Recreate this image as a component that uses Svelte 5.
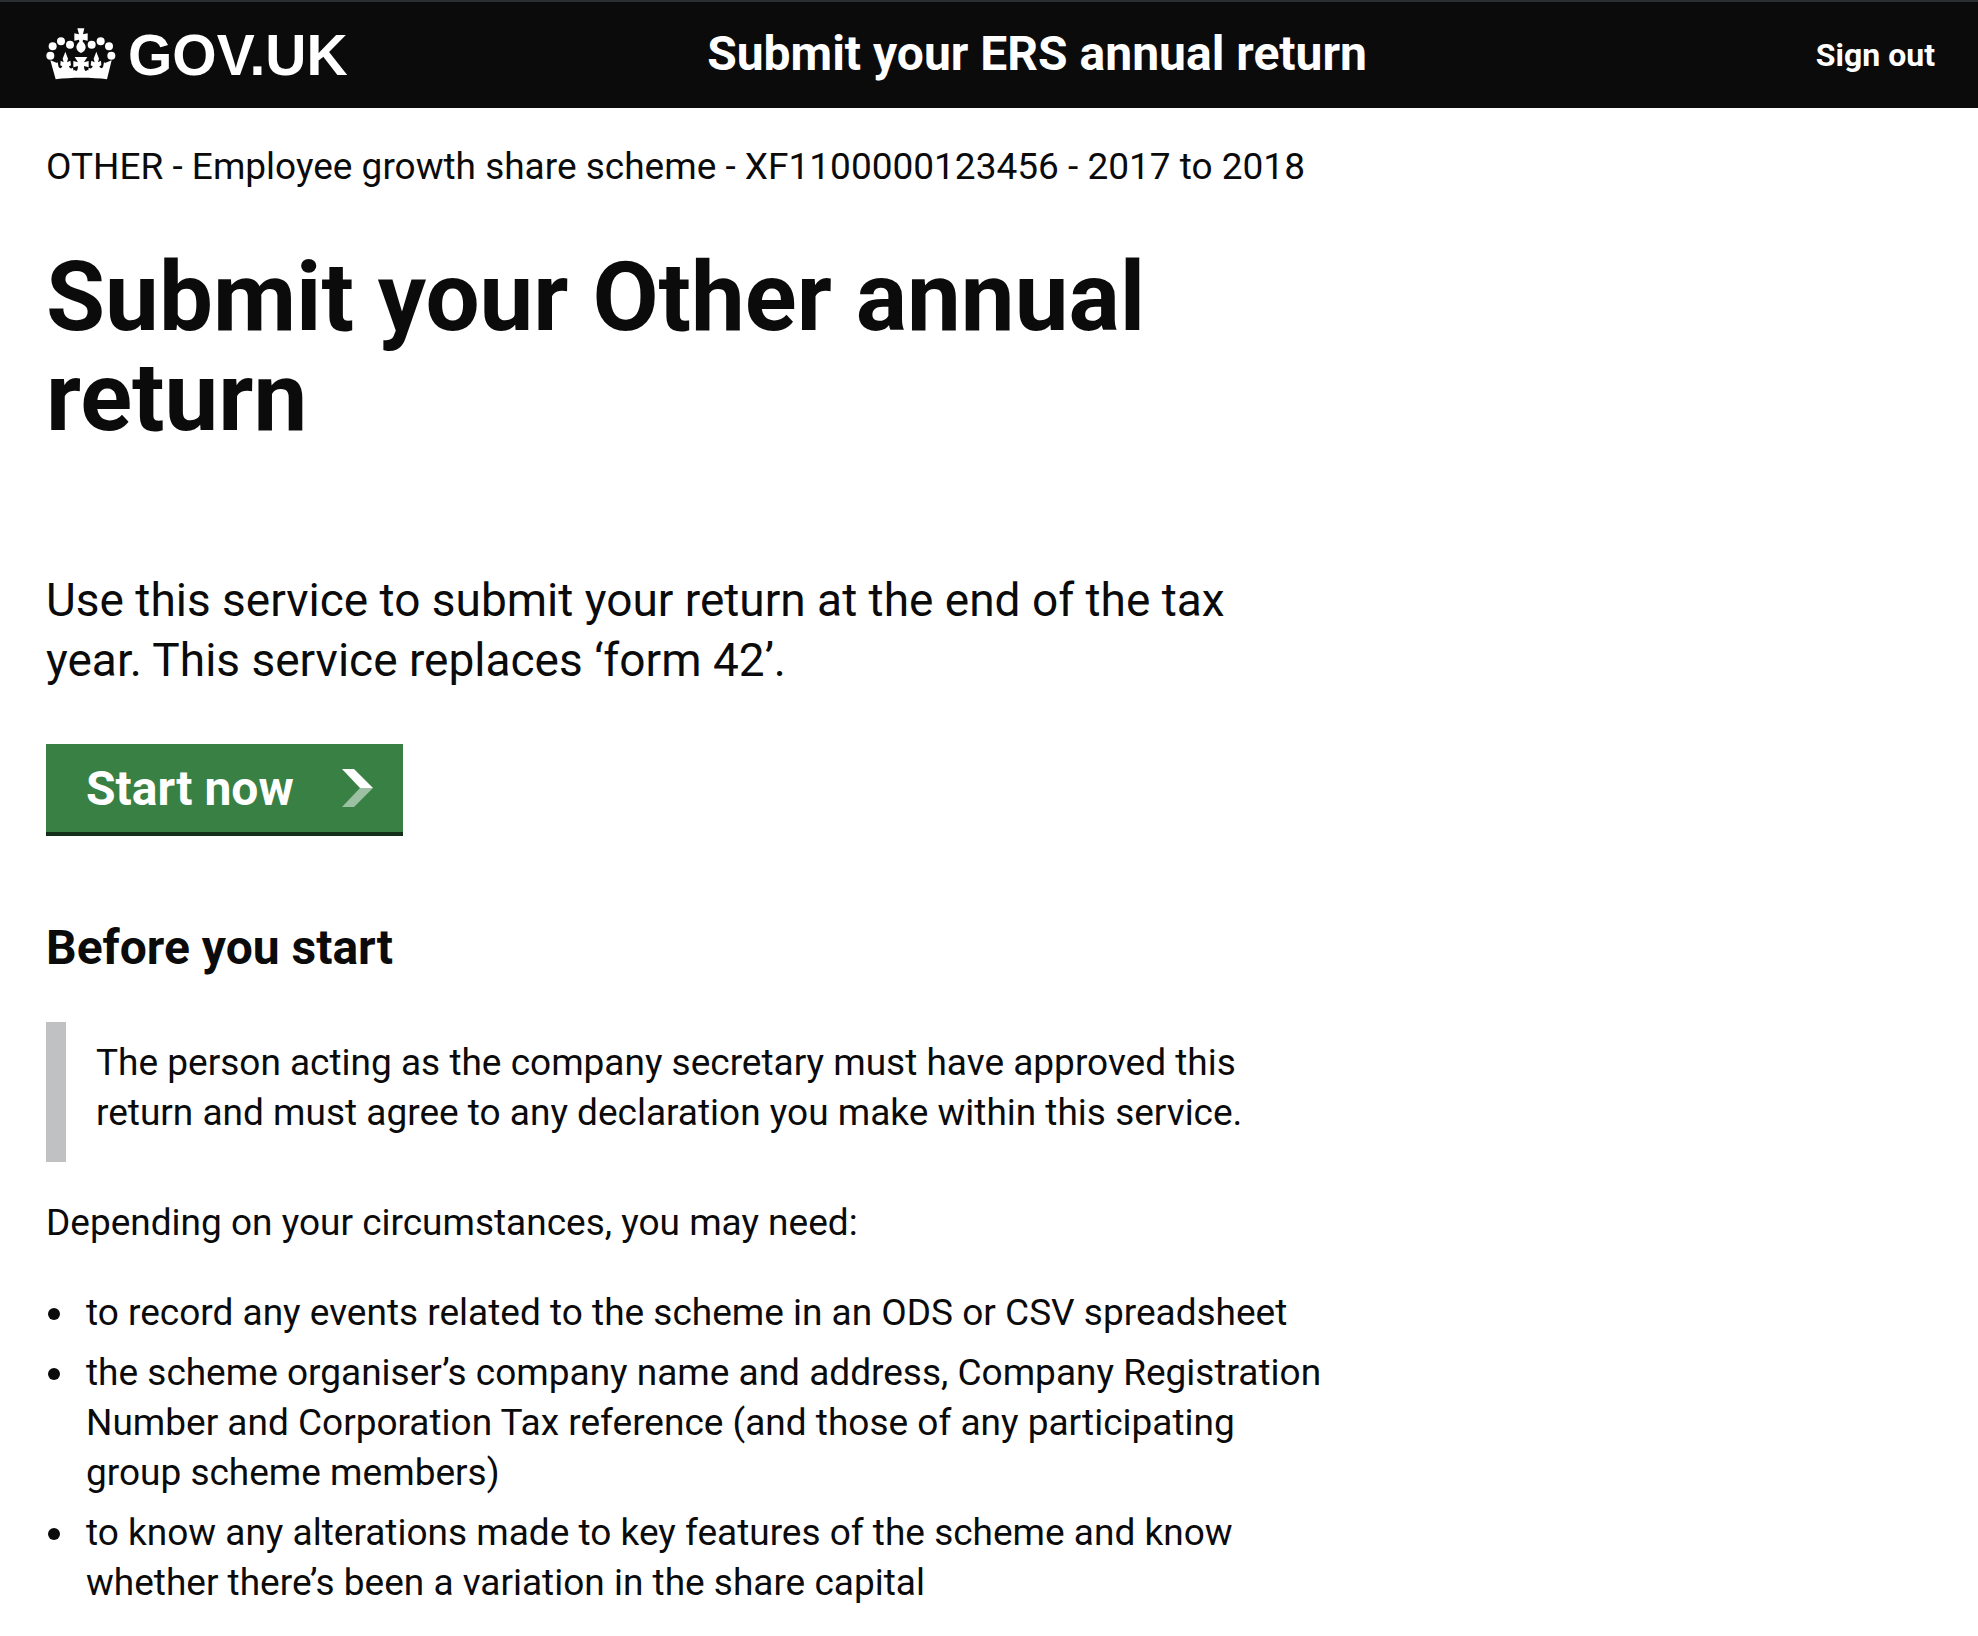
<script>
  const needs = [
    "to record any events related to the scheme in an ODS or CSV spreadsheet",
    "the scheme organiser’s company name and address, Company Registration Number and Corporation Tax reference (and those of any participating group scheme members)",
    "to know any alterations made to key features of the scheme and know whether there’s been a variation in the share capital",
  ];

  // centre x, centre y of each jewel
  const jewels = [
    [19, 92], [26, 64], [51, 49], [78, 59],
    [143, 59], [170, 49], [195, 64], [202, 92],
  ];
</script>

<header>
  <a class="logo" href="#home">
    <svg viewBox="6 6 210 168" width="70" height="56" aria-hidden="true">
      {#each jewels as [cx, cy]}
        <circle {cx} {cy} r="12" />
      {/each}
      <!-- orb and cross -->
      <path d="M100 10h21l-4 18 14-3v22l-14-3-1 6c6 5 9 11 9 17 0 8-6 14-14 17-8-3-14-9-14-17 0-6 3-12 9-17l-1-6-14 3V25l14 3z" />
      <!-- band -->
      <path d="M19 106l20 8-5 6 7 16c8-1 12 2 23 3 12 1 19 0 27-4 8 5 13 5 20 5s12 0 20-5c8 4 15 5 27 4 11-1 15-4 23-3l7-16-5-6 20-8-14 57c-44-6-108-6-154 0z" />
      <!-- side leaves -->
      <path d="M26 120l15-8 3 15c4 4 9 3 11-3l-6-3 1-14 9 5-3-11 8-21 8 21-3 11 10-5 2 14-6 3c2 7 7 8 12 4l2 14-44 4-13-2z" />
      <path d="M195 120l-15-8-3 15c-4 4-9 3-11-3l6-3-1-14-9 5 3-11-8-21-8 21 3 11-10-5-2 14 6 3c-2 7-7 8-12 4l-2 14 44 4 13-2z" />
      <!-- centre cross -->
      <path d="M92 96h38l-10 16 14-4v19l-14-4 1 10 8 12H93l8-12 1-10-14 4v-19l14 4z" />
    </svg>
    <span>GOV.UK</span>
  </a>
  <a class="service" href="#service">Submit your ERS annual return</a>
  <a class="sign-out" href="#sign-out">Sign out</a>
</header>

<main>
  <p>OTHER - Employee growth share scheme - XF1100000123456 - 2017 to 2018</p>
  <h1>Submit your Other annual return</h1>
  <p class="lede">
    Use this service to submit your return at the end of the tax year. This
    service replaces ‘form 42’.
  </p>
  <button type="button">
    Start now
    <svg viewBox="0 0 31 38" width="31" height="38" aria-hidden="true">
      <path d="M0 0h12l19 19H18z" />
      <path class="shade" d="M18 19h13L12 38H0z" />
    </svg>
  </button>
  <h2>Before you start</h2>
  <div class="inset">
    The person acting as the company secretary must have approved this return
    and must agree to any declaration you make within this service.
  </div>
  <p>Depending on your circumstances, you may need:</p>
  <ul>
    {#each needs as need}
      <li>{need}</li>
    {/each}
  </ul>
</main>

<style>
  :global(body) {
    margin: 0;
    background: #fff;
  }

  header,
  main,
  button {
    font-family: Roboto, "Liberation Sans", sans-serif;
  }

  header {
    display: grid;
    grid-template-columns: 35% 1fr auto;
    align-items: center;
    height: 106px;
    padding: 0 43px 0 46px;
    border-top: 2px solid #2b2f31;
    background: #0b0b0b;
  }

  header a {
    color: #fff;
    font-weight: 700;
    text-decoration: none;
  }

  .logo {
    display: flex;
    align-items: center;
    gap: 12px;
    font-family: "Liberation Sans", Arial, sans-serif;
    font-size: 57px;
  }

  .logo svg {
    fill: #fff;
  }

  .service {
    padding-bottom: 4px;
    font-size: 48px;
  }

  .sign-out {
    font-size: 32px;
  }

  main {
    max-width: 65%;
    padding: 34px 46px;
    font-size: 37px;
    line-height: 50px;
    color: #0b0b0b;
  }

  p,
  h1,
  h2,
  ul {
    margin: 0;
  }

  h1 {
    margin: 55px 0 123px;
    font-size: 96px;
    line-height: 100px;
  }

  .lede {
    font-size: 46px;
    line-height: 60px;
  }

  button {
    display: flex;
    align-items: center;
    gap: 48px;
    height: 92px;
    margin: 54px 0 82px;
    padding: 0 30px 0 40px;
    border: 0;
    border-bottom: 4px solid #132f19;
    background: #398044;
    color: #fff;
    font-size: 48px;
    font-weight: 700;
    cursor: pointer;
  }

  button svg {
    fill: #fff;
  }

  .shade {
    opacity: 0.5;
  }

  h2 {
    font-size: 48px;
    line-height: 60px;
  }

  .inset {
    margin: 44px 0 36px;
    padding: 16px 30px 24px;
    border-left: 20px solid #bfc1c3;
  }

  ul {
    margin-top: 40px;
    padding-left: 2px;
    list-style: none;
  }

  li {
    display: grid;
    grid-template-columns: 12px 1fr;
    gap: 26px;
    margin-bottom: 10px;
  }

  li::before {
    content: "";
    width: 12px;
    height: 12px;
    margin-top: 20px;
    border-radius: 50%;
    background: #0b0b0b;
  }
</style>
